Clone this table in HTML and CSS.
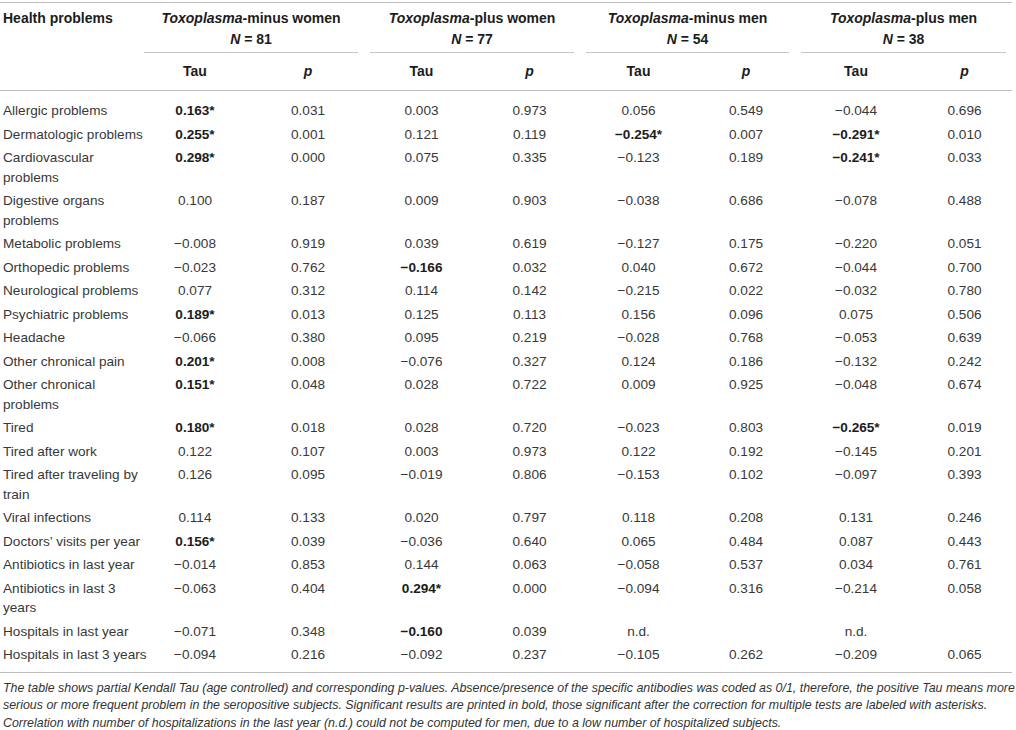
FILE: index.html
```html
<!DOCTYPE html>
<html lang="en">
<head>
<meta charset="utf-8">
<title>Health problems – Kendall Tau</title>
<link rel="stylesheet" href="styles.css">
</head>
<body>
<div class="page">
<table class="stats">
  <colgroup>
    <col class="w-label">
    <col class="w-t1"><col class="w-p1">
    <col class="w-t2"><col class="w-p2">
    <col class="w-t3"><col class="w-p3">
    <col class="w-t4"><col class="w-p4">
  </colgroup>
  <thead>
    <tr class="hd1">
      <th class="label-h" rowspan="2">Health problems</th>
      <th class="grp" colspan="2"><div class="grp-in"><i>Toxoplasma</i>-minus women<br><i>N</i> = 81</div></th>
      <th class="grp" colspan="2"><div class="grp-in"><i>Toxoplasma</i>-plus women<br><i>N</i> = 77</div></th>
      <th class="grp" colspan="2"><div class="grp-in"><i>Toxoplasma</i>-minus men<br><i>N</i> = 54</div></th>
      <th class="grp" colspan="2"><div class="grp-in"><i>Toxoplasma</i>-plus men<br><i>N</i> = 38</div></th>
    </tr>
    <tr class="hd2">
      <th>Tau</th><th><i>p</i></th>
      <th>Tau</th><th><i>p</i></th>
      <th>Tau</th><th><i>p</i></th>
      <th>Tau</th><th><i>p</i></th>
    </tr>
  </thead>
  <tbody>
    <tr><td>Allergic problems</td><td><b>0.163*</b></td><td>0.031</td><td>0.003</td><td>0.973</td><td>0.056</td><td>0.549</td><td>−0.044</td><td>0.696</td></tr>
    <tr><td>Dermatologic problems</td><td><b>0.255*</b></td><td>0.001</td><td>0.121</td><td>0.119</td><td><b>−0.254*</b></td><td>0.007</td><td><b>−0.291*</b></td><td>0.010</td></tr>
    <tr><td>Cardiovascular<br>problems</td><td><b>0.298*</b></td><td>0.000</td><td>0.075</td><td>0.335</td><td>−0.123</td><td>0.189</td><td><b>−0.241*</b></td><td>0.033</td></tr>
    <tr><td>Digestive organs<br>problems</td><td>0.100</td><td>0.187</td><td>0.009</td><td>0.903</td><td>−0.038</td><td>0.686</td><td>−0.078</td><td>0.488</td></tr>
    <tr><td>Metabolic problems</td><td>−0.008</td><td>0.919</td><td>0.039</td><td>0.619</td><td>−0.127</td><td>0.175</td><td>−0.220</td><td>0.051</td></tr>
    <tr><td>Orthopedic problems</td><td>−0.023</td><td>0.762</td><td><b>−0.166</b></td><td>0.032</td><td>0.040</td><td>0.672</td><td>−0.044</td><td>0.700</td></tr>
    <tr><td>Neurological problems</td><td>0.077</td><td>0.312</td><td>0.114</td><td>0.142</td><td>−0.215</td><td>0.022</td><td>−0.032</td><td>0.780</td></tr>
    <tr><td>Psychiatric problems</td><td><b>0.189*</b></td><td>0.013</td><td>0.125</td><td>0.113</td><td>0.156</td><td>0.096</td><td>0.075</td><td>0.506</td></tr>
    <tr><td>Headache</td><td>−0.066</td><td>0.380</td><td>0.095</td><td>0.219</td><td>−0.028</td><td>0.768</td><td>−0.053</td><td>0.639</td></tr>
    <tr><td>Other chronical pain</td><td><b>0.201*</b></td><td>0.008</td><td>−0.076</td><td>0.327</td><td>0.124</td><td>0.186</td><td>−0.132</td><td>0.242</td></tr>
    <tr><td>Other chronical<br>problems</td><td><b>0.151*</b></td><td>0.048</td><td>0.028</td><td>0.722</td><td>0.009</td><td>0.925</td><td>−0.048</td><td>0.674</td></tr>
    <tr><td>Tired</td><td><b>0.180*</b></td><td>0.018</td><td>0.028</td><td>0.720</td><td>−0.023</td><td>0.803</td><td><b>−0.265*</b></td><td>0.019</td></tr>
    <tr><td>Tired after work</td><td>0.122</td><td>0.107</td><td>0.003</td><td>0.973</td><td>0.122</td><td>0.192</td><td>−0.145</td><td>0.201</td></tr>
    <tr><td>Tired after traveling by<br>train</td><td>0.126</td><td>0.095</td><td>−0.019</td><td>0.806</td><td>−0.153</td><td>0.102</td><td>−0.097</td><td>0.393</td></tr>
    <tr><td>Viral infections</td><td>0.114</td><td>0.133</td><td>0.020</td><td>0.797</td><td>0.118</td><td>0.208</td><td>0.131</td><td>0.246</td></tr>
    <tr><td>Doctors’ visits per year</td><td><b>0.156*</b></td><td>0.039</td><td>−0.036</td><td>0.640</td><td>0.065</td><td>0.484</td><td>0.087</td><td>0.443</td></tr>
    <tr><td>Antibiotics in last year</td><td>−0.014</td><td>0.853</td><td>0.144</td><td>0.063</td><td>−0.058</td><td>0.537</td><td>0.034</td><td>0.761</td></tr>
    <tr><td>Antibiotics in last 3<br>years</td><td>−0.063</td><td>0.404</td><td><b>0.294*</b></td><td>0.000</td><td>−0.094</td><td>0.316</td><td>−0.214</td><td>0.058</td></tr>
    <tr><td>Hospitals in last year</td><td>−0.071</td><td>0.348</td><td><b>−0.160</b></td><td>0.039</td><td>n.d.</td><td></td><td>n.d.</td><td></td></tr>
    <tr><td>Hospitals in last 3 years</td><td>−0.094</td><td>0.216</td><td>−0.092</td><td>0.237</td><td>−0.105</td><td>0.262</td><td>−0.209</td><td>0.065</td></tr>
  </tbody>
</table>
<p class="note">The table shows partial Kendall Tau (age controlled) and corresponding p-values. Absence/presence of the specific antibodies was coded as 0/1, therefore, the positive Tau means more<br>serious or more frequent problem in the seropositive subjects. Significant results are printed in bold, those significant after the correction for multiple tests are labeled with asterisks.<br>Correlation with number of hospitalizations in the last year (n.d.) could not be computed for men, due to a low number of hospitalized subjects.</p>
</div>
</body>
</html>
```

FILE: styles.css
```css
html, body {
  margin: 0;
  padding: 0;
  background: #ffffff;
}

.page {
  padding-top: 2px;
  font-family: "Liberation Sans", Arial, sans-serif;
  color: #2a2a2a;
}

.stats {
  width: 1012px;
  table-layout: fixed;
  border-collapse: collapse;
  border-top: 1px solid #bdbdbd;
  font-size: 14px;
}

.w-label { width: 138px; }
.w-t1 { width: 114px; }
.w-p1 { width: 112px; }
.w-t2 { width: 115px; }
.w-p2 { width: 101px; }
.w-t3 { width: 117px; }
.w-p3 { width: 98px; }
.w-t4 { width: 122px; }
.w-p4 { width: 95px; }

.stats th {
  font-weight: bold;
  color: #1c1c1c;
  line-height: 21px;
  text-align: center;
}

.stats th.label-h {
  text-align: left;
  vertical-align: top;
  padding: 5px 0 0 3px;
  white-space: nowrap;
  border-bottom: 1px solid #bdbdbd;
}

.stats th.grp {
  padding: 5px 6px 0;
  vertical-align: top;
}

.grp-in {
  padding-bottom: 2px;
  border-bottom: 1px solid #c4c4c4;
}

.hd2 th {
  padding: 8px 6px;
  border-bottom: 1px solid #bdbdbd;
}

.stats td {
  padding: 2px 6px;
  font-size: 13.6px;
  line-height: 19.5px;
  text-align: center;
  vertical-align: top;
  color: #383838;
}

.stats td:first-child {
  text-align: left;
  padding-left: 3px;
  padding-right: 0;
  white-space: nowrap;
}

.stats td b {
  color: #1c1c1c;
}

.stats tbody tr:first-child td {
  padding-top: 10px;
}

.stats tbody tr:last-child td {
  padding-bottom: 7px;
  border-bottom: 1px solid #bdbdbd;
}

.note {
  margin: 7px 0 0 3px;
  font-size: 12.4px;
  line-height: 17.5px;
  font-style: italic;
  color: #333333;
  white-space: nowrap;
}
```
